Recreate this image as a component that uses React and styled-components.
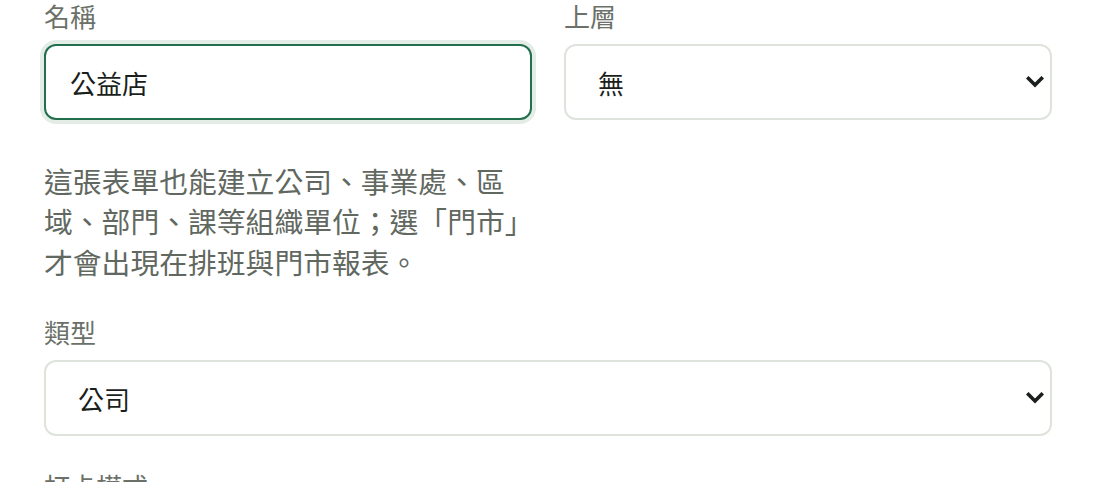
import React from "react";
import styled, { createGlobalStyle } from "styled-components";

const Global = createGlobalStyle`
  html, body { margin: 0; padding: 0; background: #ffffff; }
  body { font-family: "Noto Sans CJK TC", "Noto Sans", sans-serif; }
  * { box-sizing: border-box; }
`;

const Page = styled.div`
  width: 1096px;
  height: 482px;
  overflow: hidden;
  padding: 0 44px;
  display: flex;
  flex-direction: column;
`;

const Row = styled.div`
  display: grid;
  grid-template-columns: 1fr 1fr;
  column-gap: 32px;
  align-items: start;
`;

const Field = styled.div`
  display: flex;
  flex-direction: column;
  gap: 12px;
  margin-top: ${(p) => p.$top || 0}px;
`;

const Label = styled.label`
  font-size: 26px;
  line-height: 32px;
  height: 32px;
  color: #6b7169;
  display: block;
`;

const TextInput = styled.input`
  width: 100%;
  height: 76px;
  border-radius: 12px;
  border: 2px solid ${(p) => (p.$focused ? "#226f4d" : "#dee3dc")};
  box-shadow: ${(p) => (p.$focused ? "0 0 0 4px #e4ece7" : "none")};
  padding: 0 24px;
  font-family: inherit;
  font-size: 26px;
  color: #1b1f1c;
  background: #fff;
  outline: none;
`;

const SelectWrap = styled.div`
  position: relative;
  width: 100%;
`;

const Select = styled.select`
  width: 100%;
  height: 76px;
  border-radius: 12px;
  border: 2px solid #dee3dc;
  padding: 0 48px 0 32px;
  font-family: inherit;
  font-size: 26px;
  color: #1b1f1c;
  background: #fff;
  appearance: none;
  -webkit-appearance: none;
  outline: none;
`;

const Chevron = styled.svg`
  position: absolute;
  right: 8px;
  top: 50%;
  width: 18px;
  height: 12px;
  margin-top: -6px;
  pointer-events: none;
`;

const Hint = styled.p`
  margin: 41px 0 0;
  font-size: 28.8px;
  line-height: 40.4px;
  color: #61685f;
`;

function ChevronIcon() {
  return (
    <Chevron viewBox="0 0 18 12" aria-hidden="true">
      <path d="M2.5 2.5 L9 9 L15.5 2.5" fill="none" stroke="#1b1f1c" strokeWidth="3.6" strokeLinecap="square" strokeLinejoin="miter" />
    </Chevron>
  );
}

function SelectField({ label, value, options, top }) {
  return (
    <Field $top={top}>
      <Label>{label}</Label>
      <SelectWrap>
        <Select defaultValue={value}>
          {options.map((o) => (
            <option key={o} value={o}>{o}</option>
          ))}
        </Select>
        <ChevronIcon />
      </SelectWrap>
    </Field>
  );
}

export default function App() {
  return (
    <>
      <Global />
      <Page>
        <Row>
          <div>
            <Field>
              <Label>名稱</Label>
              <TextInput $focused defaultValue="公益店" />
            </Field>
            <Hint>
              這張表單也能建立公司、事業處、區域、部門、課等組織單位；選「門市」才會出現在排班與門市報表。
            </Hint>
          </div>
          <SelectField label="上層" value="無" options={["無", "總公司"]} />
        </Row>
        <SelectField
          label="類型"
          value="公司"
          options={["公司", "事業處", "區域", "部門", "課", "門市"]}
          top={34}
        />
        <Field $top={34}>
          <Label>打卡模式</Label>
        </Field>
      </Page>
    </>
  );
}
